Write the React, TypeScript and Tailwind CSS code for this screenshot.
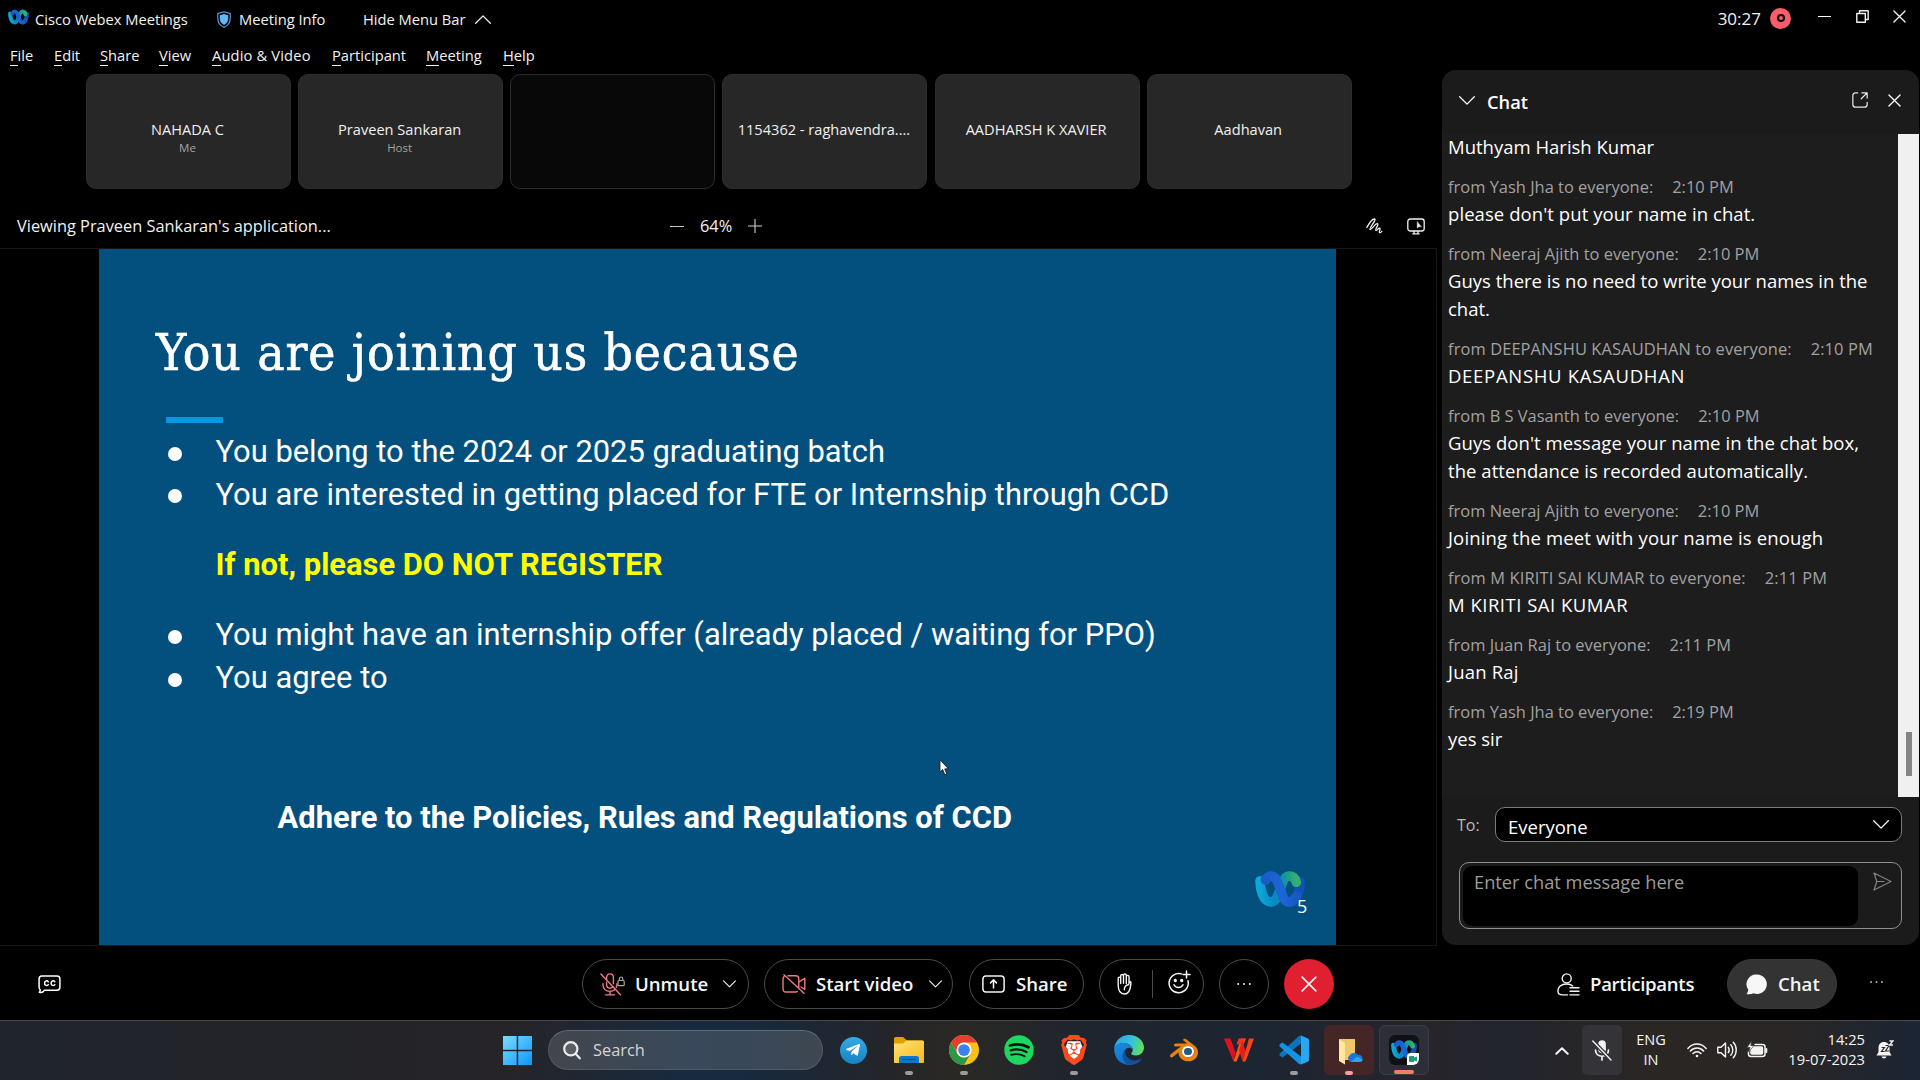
import type { ReactNode } from "react";
import { SiBrave, SiBlender } from "react-icons/si";
import { FaTelegramPlane } from "react-icons/fa";

/* ---------- logos and icons ---------- */

function WebexLogo({ id, className }: { id: string; className: string }) {
  return (
    <svg viewBox="0 0 50 36" className={className} fill="none" strokeLinecap="round" strokeWidth="9.6">
      <defs>
        <linearGradient id={id + "a"} x1="4" y1="8" x2="42" y2="8" gradientUnits="userSpaceOnUse">
          <stop offset="0" stopColor="#0da8d6" />
          <stop offset="0.4" stopColor="#0888c4" />
          <stop offset="0.65" stopColor="#12949c" />
          <stop offset="1" stopColor="#36b070" />
        </linearGradient>
        <linearGradient id={id + "b"} x1="8" y1="0" x2="45" y2="0" gradientUnits="userSpaceOnUse">
          <stop offset="0" stopColor="#1a5bc6" />
          <stop offset="0.5" stopColor="#1c66d8" />
          <stop offset="1" stopColor="#1656c0" />
        </linearGradient>
      </defs>
      <path d="M45 10.5C45 20 41.500 31 34 31" stroke="#1250b4" />
      <path d="M5 10C5 18 8 31 16 31C25.500 31 25 5 34 5C38.500 5 40.500 8 41.300 11.300" stroke={`url(#${id}a)`} />
      <path d="M10.500 9C12 6 13.500 5 16 5C25.500 5 25 31 34 31C37.500 31 40 28.500 42 25" stroke={`url(#${id}b)`} />
    </svg>
  );
}

const line = { fill: "none", stroke: "currentColor", strokeLinecap: "round", strokeLinejoin: "round" } as const;

const Chevron = ({ up, className }: { up?: boolean; className: string }) => (
  <svg viewBox="0 0 16 9" className={className} {...line} strokeWidth="1.3">
    <path d={up ? "M0.700 8.300L8 0.900L15.300 8.300" : "M0.700 0.700L8 8.100L15.300 0.700"} />
  </svg>
);

const Cross = ({ className }: { className: string }) => (
  <svg viewBox="0 0 14 14" className={className} {...line} strokeWidth="1.4">
    <path d="M1 1L13 13M13 1L1 13" />
  </svg>
);

const Shield = () => (
  <svg viewBox="0 0 14 17" className="h-[17px] w-[14px]">
    <path d="M7 0.700L13.200 2.500V7.500C13.200 12 10.500 14.900 7 16.300C3.500 14.900 0.800 12 0.800 7.500V2.500Z" fill="none" stroke="#5fa8f0" strokeWidth="1.100" />
    <path d="M7 3L11.200 4.200V7.600C11.200 10.700 9.500 12.800 7 14C4.500 12.800 2.800 10.700 2.800 7.600V4.200Z" fill="#64b4fa" />
  </svg>
);

const Annotate = () => (
  <svg viewBox="0 0 17 16" className="h-4 w-[17px]" {...line} strokeWidth="1.300">
    <path d="M0.800 9.500C3 5.500 6.500 0.900 8.500 1C11 1.300 2.800 10.500 4 11.500C5.500 12.200 9.300 5.200 11.300 5.700C13.300 6.200 8.800 11.500 9.800 12.300C11 13 12.300 9.800 13.800 10.200C15 10.700 12.500 14 13.600 14.600C14.400 15 15.200 14 15.800 13.400" />
  </svg>
);

const ScreenControl = () => (
  <svg viewBox="0 0 18 17" className="h-[17px] w-[18px]" {...line} strokeWidth="1.300">
    <rect x="0.800" y="1" width="16.400" height="12" rx="2.500" />
    <path d="M7 13.300V15.500M11 13.300V15.500M5.800 15.800H12.200" />
    <path d="M10.300 4V10L11.800 8.700H13.900Z" fill="currentColor" strokeWidth="0.600" />
  </svg>
);

const PopOut = () => (
  <svg viewBox="0 0 17 17" className="h-4 w-4" {...line} strokeWidth="1.300">
    <path d="M6 1H3.800C2 1 0.900 2 0.900 3.800V13.200C0.900 15 2 16.100 3.800 16.100H13.200C15 16.100 16.100 15 16.100 13.200V11" />
    <path d="M10.500 0.900H16.100V6.500M16 1L9.800 7.200" />
  </svg>
);

const Captions = () => (
  <svg viewBox="0 0 23 19" className="h-[19px] w-[23px] text-white" {...line} strokeWidth="1.500">
    <path d="M4 1H19C20.800 1 21.900 2.100 21.900 3.900V12.300C21.900 14.100 20.800 15.200 19 15.200H6.500C5.500 17 3.500 17.800 1.300 17.300C2 16.500 2.300 15.600 2.200 14.800C1.500 14.200 1.100 13.300 1.100 12.300V3.900C1.100 2.100 2.200 1 4 1Z" />
    <path d="M10.300 6.800C9.200 5.200 6.600 5.700 6.600 8.200C6.600 10.600 9.200 11.200 10.300 9.600M16.800 6.800C15.700 5.200 13.100 5.700 13.100 8.200C13.100 10.600 15.700 11.200 16.800 9.600" />
  </svg>
);

const MicMuted = () => (
  <svg viewBox="0 0 25 23" className="h-[23px] w-[25px]" {...line} strokeWidth="1.400">
    <g stroke="#f07a82">
      <path d="M0.900 1L20.500 21.800" />
      <path d="M6.600 6.500V4.500C6.600 2.300 8 0.900 10 0.900S13.400 2.300 13.400 4.500V10.800M6.600 9.300V11.500C6.600 13.800 8 15.200 10 15.200C11 15.200 11.800 14.900 12.400 14.300" />
      <path d="M3 10.800V11.800C3 15.800 5.800 18.400 10 18.400C12 18.400 13.500 17.900 14.700 16.800M10 18.600V21.900M5.500 21.900H14.500M17 10.800C17 12.300 16.800 13.300 16.300 14.300" />
    </g>
    <g stroke="#a5a5a5" strokeWidth="1.200">
      <rect x="18" y="7.500" width="6.200" height="5.200" rx="1" />
      <path d="M19.400 7.300V5.800C19.400 4.700 20.100 4 21.100 4S22.800 4.700 22.800 5.800V7.300" />
    </g>
  </svg>
);

const VideoOff = () => (
  <svg viewBox="0 0 24 20" className="h-5 w-6" {...line} stroke="#f07a82" strokeWidth="1.400">
    <path d="M2 0.800L22 19.200M6 1.800H13.800C15.600 1.800 16.800 3 16.800 4.800V13.500M15.300 17.500C14.900 17.800 14.300 18 13.800 18H4C2.200 18 1 16.800 1 15V4.800C1 3.800 1.400 3 2 2.500" />
    <path d="M16.900 8L22.800 4.300V15.300L19 13" />
  </svg>
);

const ShareIcon = () => (
  <svg viewBox="0 0 23 18" className="h-[18px] w-[23px]" {...line} strokeWidth="1.500">
    <rect x="0.900" y="0.900" width="21.200" height="16.200" rx="3" />
    <path d="M11.500 13V5M8.500 7.900L11.500 4.900L14.500 7.900" />
  </svg>
);

const Hand = () => (
  <svg viewBox="0 0 15 22" className="h-[22px] w-[15px]" {...line} strokeWidth="1.400">
    <path d="M1.200 12V5.500C1.200 3.700 3.700 3.700 3.700 5.500V10.500M3.700 6V2.800C3.700 1 6.500 1 6.500 2.800V10.300M6.500 3V2.300C6.500 0.500 9.300 0.500 9.300 2.300V10.500M9.300 4V3.600C9.300 1.900 12 1.900 12 3.600V10.500L13.200 8.500C13.900 8.800 14 9.600 13.900 10.500C13.500 14 13.500 21 7.500 21C3 21 1.200 18 1.200 12" />
    <path d="M11.800 11.500C9 12 7.300 14 7.300 16.800" />
  </svg>
);

const Emoji = () => (
  <svg viewBox="0 0 24 24" className="h-6 w-6" {...line} strokeWidth="1.500">
    <path d="M14.500 3.900A9.600 9.600 0 1 0 21 10.800" />
    <path d="M19.500 1V8M16 4.500H23M7 14.800C8.500 18.300 14.500 18.300 16 14.800" />
    <circle cx="8.300" cy="10.500" r="0.900" fill="currentColor" />
    <circle cx="14.700" cy="10.500" r="0.900" fill="currentColor" />
  </svg>
);

const Dots = ({ className }: { className: string }) => (
  <svg viewBox="0 0 16 4" className={className} fill="currentColor">
    <circle cx="2.200" cy="2" r="1" />
    <circle cx="8" cy="2" r="1" />
    <circle cx="13.800" cy="2" r="1" />
  </svg>
);

const Person = () => (
  <svg viewBox="0 0 23 23" className="h-[23px] w-[23px]" {...line} strokeWidth="1.400">
    <circle cx="9.700" cy="5.400" r="4.500" />
    <path d="M10.500 21.900H5.500C2.500 21.900 0.900 20.500 0.900 18C0.900 13.800 4 11 9.700 11C12.500 11 14.300 11.600 15.700 12.900M13 14.800H22M13 18.300H22M13 21.900H22" />
  </svg>
);

const Bubble = () => (
  <svg viewBox="0 0 21 21" className="h-[21px] w-[21px]" fill="#f7f7f7">
    <path d="M11 0.500A9.700 9.700 0 1 1 7.500 19.200C5.500 20.400 3 20.700 0.500 20C1.600 18.800 2.200 17.200 2.200 15.600A9.700 9.700 0 0 1 11 0.500Z" />
  </svg>
);

const Send = () => (
  <svg viewBox="0 0 19 19" className="h-[19px] w-[19px]" {...line} strokeWidth="1.200">
    <path d="M1 1L18 9.500L1 18L3.800 9.500ZM3.800 9.500H11" />
  </svg>
);

/* ---------- slide ---------- */

const Bullet = ({ children }: { children: ReactNode }) => (
  <li className="flex h-[42.600px] items-center">
    <span className="mt-[3px] h-3.5 w-3.5 rounded-full bg-white" />
    <span className="ml-[33.500px] whitespace-nowrap">{children}</span>
  </li>
);

function Slide() {
  return (
    <div className="relative h-[696px] w-[1237px] bg-[#03507f] font-['Roboto'] text-[30.900px] leading-[42px] text-white">
      <h1 className="pt-[69px] pl-[57px] font-['DejaVu_Serif_Condensed','DejaVu_Serif',serif] text-[51px] leading-[70px] tracking-[0.900px] whitespace-nowrap [-webkit-text-stroke:0.600px_white]">
        You are joining us because
      </h1>
      <div className="mt-[29px] ml-[67px] h-1.5 w-[57px] bg-[#0a97e0]" />
      <ul className="mt-2 pl-[69px]">
        <Bullet>You belong to the 2024 or 2025 graduating batch</Bullet>
        <Bullet>You are interested in getting placed for FTE or Internship through CCD</Bullet>
      </ul>
      <p className="mt-7 pl-[116.500px] font-bold text-[#ffff00]">If not, please DO NOT REGISTER</p>
      <ul className="mt-7 pl-[69px]">
        <Bullet>You might have an internship offer (already placed / waiting for PPO)</Bullet>
        <Bullet>You agree to</Bullet>
      </ul>
      <p className="mt-[98px] pl-[178.500px] font-bold">Adhere to the Policies, Rules and Regulations of CCD</p>
      <WebexLogo id="slide" className="absolute top-[622px] left-[1156px] h-9 w-[50px]" />
      <span className="absolute top-[645px] left-[1198px] font-['Open_Sans'] text-[18px] leading-6">5</span>
      <svg viewBox="0 0 10 17" className="absolute top-[510px] left-[840px] h-[17px] w-2.5">
        <path d="M1 0.800V13L3.700 10.500L5.800 15.800L7.800 15L5.700 9.900L9.300 9.700Z" fill="#fff" stroke="#111" strokeWidth="0.800" />
      </svg>
    </div>
  );
}

/* ---------- header ---------- */

const menus = [
  { label: "File", w: "w-[44px]" },
  { label: "Edit", w: "w-[46px]" },
  { label: "Share", w: "w-[59px]" },
  { label: "View", w: "w-[53px]" },
  { label: "Audio & Video", w: "w-[120px] tracking-[0.150px]" },
  { label: "Participant", w: "w-[94px]" },
  { label: "Meeting", w: "w-[77px]" },
  { label: "Help", w: "w-[40px]" },
];

const tiles = [
  { name: "NAHADA C", role: "Me" },
  { name: "Praveen Sankaran", role: "Host" },
  { name: "", role: "" },
  { name: "1154362 - raghavendra....", role: "" },
  { name: "AADHARSH K XAVIER", role: "" },
  { name: "Aadhavan", role: "" },
];

function Header() {
  return (
    <header className="flex h-[70px] flex-col text-[14.700px] whitespace-nowrap text-[#f2f2f2]">
      <div className="flex h-[38px] items-center">
        <WebexLogo id="top" className="mb-1 ml-2 h-4 w-[21px]" />
        <span className="ml-1.5 w-[153px]">Cisco Webex Meetings</span>
        <span className="ml-[29px] flex"><Shield /></span>
        <span className="ml-2 w-[87px]">Meeting Info</span>
        <span className="ml-[37px] w-[102px]">Hide Menu Bar</span>
        <Chevron up className="ml-2.5 h-[9px] w-4" />
        <span className="ml-auto text-[17px]">30:27</span>
        <span className="mr-[27px] mb-0.5 ml-[9px] flex h-[21px] w-[21px] items-center justify-center rounded-full bg-[#f95c6b]">
          <span className="h-2 w-2 rounded-full border-2 border-black" />
        </span>
        <span className="mb-[5px] h-[1.500px] w-[13px] bg-white" />
        <svg viewBox="0 0 13 13" className="mb-1.5 ml-[25px] h-[13px] w-[13px]" {...line} strokeWidth="1.400" strokeLinecap="butt">
          <path d="M0.800 3.500H9.300V12.200H0.800ZM3.500 3.200V0.800H12.200V9.500H9.600" />
        </svg>
        <Cross className="mr-3.5 mb-1.5 ml-6 h-[13px] w-[13px]" />
      </div>
      <nav className="flex h-8 items-center pt-[3px] pl-2.5">
        {menus.map((m) => (
          <span key={m.label} className={m.w}>
            <span className="border-b border-[#f2f2f2] leading-none">{m.label[0]}</span>
            {m.label.slice(1)}
          </span>
        ))}
      </nav>
    </header>
  );
}

function Tiles() {
  return (
    <div className="mt-1 flex shrink-0 gap-[7.150px] pl-[86px]">
      {tiles.map((t, i) =>
        t.name ? (
          <div key={i} className="flex h-[115px] w-[205px] flex-col items-center rounded-[10px] border border-[#2d2d2d] bg-[#272727] pt-[43px] pr-0.5 whitespace-nowrap">
            <span className="text-[14.600px] leading-[22px] text-[#f0f0f0]">{t.name}</span>
            <span className="text-[11.500px] leading-4 text-[#a3a3a3]">{t.role}</span>
          </div>
        ) : (
          <div key={i} className="h-[115px] w-[205px] rounded-[10px] border border-[#2b2b2b] bg-[#080808]" />
        ),
      )}
    </div>
  );
}

/* ---------- chat ---------- */

const messages = [
  { from: "Yash Jha", time: "2:10 PM", text: ["please don't put your name in chat."], track: "tracking-[0.070px]" },
  { from: "Neeraj Ajith", time: "2:10 PM", text: ["Guys there is no need to write your names in the", "chat."] },
  { from: "DEEPANSHU KASAUDHAN", time: "2:10 PM", text: ["DEEPANSHU KASAUDHAN"], track: "tracking-[0.700px]", meta: "tracking-[0.100px]" },
  { from: "B S Vasanth", time: "2:10 PM", text: ["Guys don't message your name in the chat box,", "the attendance is recorded automatically."], track: "tracking-[0.060px]" },
  { from: "Neeraj Ajith", time: "2:10 PM", text: ["Joining the meet with your name is enough"], track: "tracking-[0.150px]" },
  { from: "M KIRITI SAI KUMAR", time: "2:11 PM", text: ["M KIRITI SAI KUMAR"], track: "tracking-[0.500px]", meta: "tracking-[0.130px]" },
  { from: "Juan Raj", time: "2:11 PM", text: ["Juan Raj"], track: "tracking-[0.200px]" },
  { from: "Yash Jha", time: "2:19 PM", text: ["yes sir"] },
];

function ChatPanel() {
  return (
    <aside className="flex h-[875px] w-[477px] flex-col overflow-hidden rounded-[14px] bg-[#1b1b1b]">
      <div className="flex h-16 items-center pl-[17px] text-white">
        <Chevron className="mb-1 h-[9px] w-4" />
        <span className="ml-3 text-[18.300px] font-semibold">Chat</span>
        <span className="mb-1 ml-auto flex text-[#e8e8e8]"><PopOut /></span>
        <Cross className="mr-[18px] mb-1 ml-5 h-[13px] w-[13px]" />
      </div>
      <div className="flex h-[663px] bg-[#1d1d1d]">
        <div className="flex-1 pl-1.5 text-[18.500px] leading-7 whitespace-nowrap text-white">
          <p className="-mt-px">Muthyam Harish Kumar</p>
          {messages.map((m, i) => (
            <div key={i} className="mt-[13px]">
              <p className={`flex h-[26px] items-center gap-[19px] text-[16.450px] text-[#a2a2a2] ${m.meta ?? ""}`}>
                <span>from {m.from} to everyone:</span>
                <span>{m.time}</span>
              </p>
              {m.text.map((t) => (
                <p key={t} className={m.track}>{t}</p>
              ))}
            </div>
          ))}
        </div>
        <div className="w-[21px] bg-[#f0f0f0] pt-[598px] pl-2">
          <div className="h-11 w-1.5 bg-[#858585]" />
        </div>
      </div>
      <div className="mt-2.5 flex h-[35px] items-center pl-[15px]">
        <span className="w-[38px] text-[16px] text-[#b8b8b8]">To:</span>
        <div className="flex h-[35px] w-[407px] items-center justify-between rounded-[10px] border border-[#7d7d7d] bg-black pr-3 pl-3 text-[18.500px] text-white">
          <span className="pt-1">Everyone</span>
          <Chevron className="h-[9px] w-4" />
        </div>
      </div>
      <div className="mt-5 ml-[17px] flex h-[67px] w-[443px] justify-between rounded-[10px] border border-[#8f8f8f] p-[3px] pr-[9px]">
        <div className="h-[60px] w-[395px] rounded-[9px] bg-black pt-0.5 pl-[11px] text-[18.250px] leading-7 text-[#9c9c9c]">Enter chat message here</div>
        <span className="pt-1.5 text-[#828282]"><Send /></span>
      </div>
    </aside>
  );
}

/* ---------- meeting controls ---------- */

function Controls() {
  const pill = "flex h-[50px] items-center rounded-full border border-[#4b4b4b]";
  return (
    <div className="flex h-[74px] items-center pt-0.5 whitespace-nowrap text-[18.600px] font-semibold text-[#f5f5f5]">
      <span className="ml-[38px] w-[544px]"><Captions /></span>
      <div className={`${pill} w-[167px] pl-[17px]`}>
        <MicMuted />
        <span className="ml-2.5 w-[88px]">Unmute</span>
        <Chevron className="h-2 w-[13px]" />
      </div>
      <div className={`${pill} ml-[15px] w-[189px] pl-[17px]`}>
        <VideoOff />
        <span className="ml-[10px] w-[113px]">Start video</span>
        <Chevron className="h-2 w-[13px]" />
      </div>
      <div className={`${pill} ml-4 w-[115px] pl-3`}>
        <ShareIcon />
        <span className="ml-[11px]">Share</span>
      </div>
      <div className={`${pill} ml-[15px] w-[105px] pl-[17px]`}>
        <Hand />
        <span className="ml-5 h-7 w-px bg-[#4b4b4b]" />
        <span className="mb-1 ml-3.5"><Emoji /></span>
      </div>
      <div className={`${pill} ml-[15px] w-[50px] justify-center`}>
        <Dots className="h-1 w-4" />
      </div>
      <div className="ml-[15px] flex h-[50px] w-[50px] items-center justify-center rounded-full bg-[#e01f31]">
        <Cross className="h-4 w-4" />
      </div>
      <span className="ml-[223px]"><Person /></span>
      <span className="ml-2.5 w-[104px] tracking-[-0.300px]">Participants</span>
      <div className="ml-[33px] flex h-[50px] w-[110px] items-center rounded-full border border-[#3a3a3a] bg-[#333333] pl-[18px]">
        <Bubble />
        <span className="ml-[11px]">Chat</span>
      </div>
      <Dots className="mb-1 ml-8 h-1 w-[15px] text-[#bdbdbd]" />
    </div>
  );
}

/* ---------- taskbar ---------- */

const Explorer = () => (
  <svg viewBox="0 0 30 28" className="h-7 w-[30px]">
    <defs>
      <linearGradient id="folder" x1="0" y1="0" x2="1" y2="1">
        <stop offset="0" stopColor="#ffe27a" />
        <stop offset="1" stopColor="#f9b915" />
      </linearGradient>
    </defs>
    <path d="M0 8V2.500Q0 1 1.500 1H9L13 4.500H28.500Q30 4.500 30 6V12H0Z" fill="#e0a100" />
    <path d="M0 7.500H9L12.500 4.500H28.500Q30 4.500 30 6V26Q30 27 29 27H1Q0 27 0 26Z" fill="url(#folder)" />
    <path d="M5 27V22.500Q5 20 7.500 20H22.500Q25 20 25 22.500V27Z" fill="#0a78d0" />
    <path d="M8.500 23.500H21.500" stroke="#0a4f96" strokeWidth="1.200" />
  </svg>
);

const Chrome = () => (
  <svg viewBox="0 0 48 48" className="h-[30px] w-[30px]">
    <circle cx="24" cy="24" r="24" fill="#fbc116" />
    <path d="M3.200 12A24 24 0 0 1 44.800 12H24A12 12 0 0 0 13.600 18L12.500 28Z" fill="#e83e30" />
    <path d="M3.200 12L13.600 30A12 12 0 0 0 34.400 30L24 48A24 24 0 0 1 3.200 12Z" fill="#2a9846" />
    <circle cx="24" cy="24" r="12" fill="#fff" />
    <circle cx="24" cy="24" r="9.400" fill="#3b82f0" />
  </svg>
);

const Spotify = () => (
  <svg viewBox="0 0 30 30" className="h-[30px] w-[30px]" fill="none" stroke="#08140b" strokeLinecap="round">
    <circle cx="15" cy="15" r="14.700" fill="#1fd760" stroke="none" />
    <path d="M6 10.500C12.500 8.700 19.500 9.500 24.500 12.300" strokeWidth="2.700" />
    <path d="M6.700 15.300C12 13.800 18 14.400 22.500 17" strokeWidth="2.300" />
    <path d="M7.300 19.700C12 18.600 16.800 19 20.700 21.300" strokeWidth="1.900" />
  </svg>
);

const Edge = () => (
  <svg viewBox="0 0 30 30" className="h-[30px] w-[30px]">
    <defs>
      <linearGradient id="edgeTop" x1="0" y1="0.400" x2="1" y2="0.600">
        <stop offset="0" stopColor="#2ba6e8" />
        <stop offset="0.550" stopColor="#35c3d8" />
        <stop offset="1" stopColor="#66e04c" />
      </linearGradient>
      <linearGradient id="edgeLeft" x1="0" y1="0" x2="0.600" y2="1">
        <stop offset="0" stopColor="#1c90e0" />
        <stop offset="1" stopColor="#0f6cc8" />
      </linearGradient>
    </defs>
    <path d="M0.200 14C0.500 6 7 0 15 0C24 0 30 6.300 30 12.500C30 17.500 26 20.500 22 20.500C18.500 20.500 17 19.300 17.300 18.500C17.700 17.600 18.700 17 18.700 15C18.700 11 14 8 9.500 8C4 8 1 11.500 0.200 14Z" fill="url(#edgeTop)" />
    <path d="M0.200 14C1.500 10 5 8 9.500 8C14.500 8 18.700 11 18.700 15C17.500 12.500 14.500 12 12.500 13.500C8 17 10 25 19 29.500C8 32 0 24 0.200 14Z" fill="url(#edgeLeft)" />
    <path d="M12.500 13.500C8.500 17.500 13.500 25.500 21 25.500C24.500 25.500 27 24 28.200 22.800C26.500 27 21.500 30 16 30C9 29.500 5.500 18 12.500 13.500Z" fill="#13519f" />
  </svg>
);

const Blender = () => (
  <span className="relative flex h-[28px] w-[28px] items-center justify-center">
    <SiBlender className="h-[28px] w-[28px] text-[#e8820c]" />
    <span className="absolute top-[10px] left-[12px] h-[11px] w-[12px] rounded-full border-2 border-white bg-[#265787]" />
  </span>
);

const Wps = () => (
  <svg viewBox="0 0 30 24" className="h-6 w-[30px]">
    <path d="M0 0.500H6.500L11.500 14.500L9.500 23.500Z" fill="#e0121c" />
    <path d="M9.500 23.500L17 0.500H22L12.500 23.500Z" fill="#ff5a1a" />
    <path d="M14.500 0.500H21L18 9L17 6.500H12.500Z" fill="#f5301c" />
    <path d="M15 12L18.500 3L21.500 13L18.500 23.500Z" fill="#e0201c" />
    <path d="M18.500 23.500L25 0.500H30L21.500 23.500Z" fill="#ff4216" />
  </svg>
);

const VsCode = () => (
  <svg viewBox="0 0 30 30" className="h-[30px] w-[30px]">
    <path d="M22 0.500L29 3.500Q30 4 30 5V25Q30 26 29 26.500L22 29.500Z" fill="#29a7f2" />
    <path d="M22 0.500V8.500L3.500 22.500L0.500 20.500V18.700L20 1Z" fill="#0b74bd" />
    <path d="M22 29.500V21.500L3.500 7.500L0.500 9.500V11.300L20 29Z" fill="#1593e0" />
  </svg>
);

const OneDriveFolder = () => (
  <svg viewBox="0 0 24 27" className="mt-0.5 ml-1 h-[27px] w-6">
    <path d="M0 1H16V22H6Z" fill="#efc869" />
    <path d="M0 1L6 5V26.500L0 23Z" fill="#ffe79c" />
    <path d="M11.500 24A3.800 3.800 0 0 1 10.500 17.500A5 5 0 0 1 19 17A3.600 3.600 0 0 1 23.500 21Q23.500 24 20.500 24Z" fill="#1578d4" />
    <path d="M12 24L18 18.500L23.500 21.500Q23.500 24 20.500 24Z" fill="#2fa4ee" />
  </svg>
);

const WebexApp = () => (
  <span className="relative flex h-[30px] w-[30px] items-center justify-center rounded-[6px] bg-[#101114]">
    <WebexLogo id="task" className="mb-0.5 h-[19px] w-[26px]" />
    <span className="absolute right-0 bottom-0 flex h-3 w-3 items-center justify-center rounded-tl-[4px] rounded-br-[6px] bg-white">
      <svg viewBox="0 0 8 6" className="h-1.5 w-2" fill="#1f9d7a">
        <path d="M0 1Q0 0 1 0H5V1.500L8 0.500V5.500L5 4.500V6H1Q0 6 0 5Z" />
      </svg>
    </span>
  </span>
);

const apps: { icon: ReactNode; mark?: string; tile?: string }[] = [
  { icon: <span className="mr-px flex h-[27px] w-[27px] items-center justify-center rounded-full bg-linear-to-b from-[#35a9e6] to-[#1383c4]"><FaTelegramPlane className="mr-0.5 h-4 w-4 text-white" /></span> },
  { icon: <Explorer />, mark: "w-2 bg-[#9a9a9a]" },
  { icon: <Chrome />, mark: "w-2 bg-[#9a9a9a]" },
  { icon: <Spotify /> },
  {
    icon: (
      <svg viewBox="0 0 24 24" className="h-[30px] w-[30px]">
        <path d="M7 5L17 5L18.500 9L16 17L12 20L8 17L5.500 9Z" fill="#fff" />
        <SiBrave size={24} color="#fb4a1c" />
      </svg>
    ),
    mark: "w-2 bg-[#9a9a9a]",
  },
  { icon: <Edge /> },
  { icon: <Blender /> },
  { icon: <Wps /> },
  { icon: <VsCode />, mark: "w-2 bg-[#9a9a9a]" },
  { icon: <OneDriveFolder />, mark: "w-2 bg-[#ff9aa6]", tile: "bg-[#452626]" },
  { icon: <WebexApp />, mark: "w-5 bg-[#f08168]", tile: "border border-[#3a3d46] bg-[#2c2f37]" },
];

function Taskbar() {
  return (
    <footer className="flex h-[60px] items-center border-t border-[#4a4a4c] bg-linear-[90deg,#20242c_0%,#242428_20%,#262428_26%,#172a3f_36%,#18293b_40%,#24252a_46%,#2a2824_50%,#1f252e_56%,#1c2532_66%,#28242a_74%,#22252e_78%,#2a2624_86%,#2a2625_93%,#1b2534_100%] text-[#f4f4f4]">
      <svg viewBox="0 0 29 29" className="ml-[503px] h-[29px] w-[29px]">
        <defs>
          <linearGradient id="win" x1="0" y1="0" x2="1" y2="1">
            <stop offset="0" stopColor="#7bdcff" />
            <stop offset="1" stopColor="#0d96fa" />
          </linearGradient>
        </defs>
        <path d="M0 0H13.700V13.700H0ZM15.200 0H29V13.700H15.200ZM0 15.200H13.700V29H0ZM15.200 15.200H29V29H15.200Z" fill="url(#win)" />
      </svg>
      <div className="mb-px ml-4 flex h-10 w-[275px] items-center rounded-full border border-white/10 border-t-white/20 bg-white/15 pl-3.5">
        <svg viewBox="0 0 18 19" className="h-[19px] w-[18px]" {...line} stroke="#ececec" strokeWidth="2.200">
          <circle cx="7.800" cy="7.800" r="6.600" fill="#ffffff22" />
          <path d="M12.800 13L16.800 17.300" />
        </svg>
        <span className="mt-px ml-3 text-[16.400px] text-[#d4d6d8]">Search</span>
      </div>
      <div className="mb-px ml-1.5 flex gap-[5px]">
        {apps.map((a, i) => (
          <div key={i} className={`relative flex h-[50px] w-[50px] items-center justify-center rounded-[6px] ${a.tile ?? ""}`}>
            {a.icon}
            {a.mark && <span className={`absolute bottom-0 left-1/2 h-1 -translate-x-1/2 rounded-full ${a.mark}`} />}
          </div>
        ))}
      </div>
      <svg viewBox="0 0 14 8" className="ml-[126px] h-2 w-3.5" {...line} strokeWidth="2">
        <path d="M1.300 6.800L7 1.300L12.700 6.800" />
      </svg>
      <div className="mb-px ml-[13px] flex h-[50px] w-10 items-center justify-center rounded-[5px] bg-[#343337]">
        <svg viewBox="0 0 20 21" className="h-[21px] w-5" {...line} strokeWidth="1.700">
          <rect x="7" y="1" width="6" height="11.500" rx="3" fill="currentColor" />
          <path d="M3.500 10C3.500 18.300 16.500 18.300 16.500 10M10 16.500V20" />
          <path d="M0.800 1L19 20" stroke="#343337" strokeWidth="4" />
          <path d="M0.800 1L19 20" strokeWidth="1.400" />
        </svg>
      </div>
      <div className="mb-px ml-3.5 w-[30px] text-center text-[14.500px] leading-5">ENG<br />IN</div>
      <svg viewBox="0 0 20 15" className="mb-px ml-[21px] h-[15px] w-5" {...line} strokeWidth="1.500">
        <path d="M0.900 5.500C5.900 -0.400 14.100 -0.400 19.100 5.500M3.400 8C7.100 3.900 12.900 3.900 16.600 8M6 10.500C8.300 8 11.700 8 14 10.500" />
        <circle cx="10" cy="13" r="1.300" fill="currentColor" stroke="none" />
      </svg>
      <svg viewBox="0 0 20 18" className="mb-px ml-2.5 h-[18px] w-5" {...line} strokeWidth="1.400">
        <path d="M0.800 6.300H4L8.500 2V16L4 11.700H0.800ZM11.300 6.300C12.500 8 12.500 10 11.300 11.700M13.800 3.800C16.500 6.800 16.500 11.200 13.800 14.200M16.300 1.300C20.200 5.500 20.200 12.500 16.300 16.700" />
      </svg>
      <svg viewBox="0 0 21 17" className="mb-0.5 ml-2.5 h-[17px] w-[21px]" {...line} strokeWidth="1.500">
        <path d="M8 3.500H15.500Q18 3.500 18 6V13Q18 15.500 15.500 15.500H4Q1.500 15.500 1.500 13V10.500" />
        <rect x="4" y="6" width="11.500" height="7" rx="1" fill="currentColor" />
        <path d="M19.300 8V11" strokeWidth="2" />
        <path d="M4.500 0L0 6.500H3L1.500 11L7 4.500H4Z" fill="currentColor" stroke="#2a2625" strokeWidth="0.600" />
      </svg>
      <div className="mb-[3px] ml-[15px] w-[82px] text-right text-[14.700px] leading-5">14:25<br />19-07-2023</div>
      <svg viewBox="0 0 18 20" className="mb-px ml-[11px] h-5 w-[18px]">
        <path d="M8 2C4.500 2 2.500 4.500 2.500 8V12L0.500 15.500H15.500L13.500 12V8C13.500 4.500 11.500 2 8 2ZM5.500 16.500A2.600 2.600 0 0 0 10.500 16.500Z" fill="currentColor" />
        <path d="M5.500 7.500H8.500L5.500 11.500H8.500M9.500 5.500H13L9.500 11H13" fill="none" stroke="#2a2625" strokeWidth="1.200" />
        <path d="M13.500 1H17L13.500 5H17" fill="none" stroke="currentColor" strokeWidth="1.300" />
      </svg>
    </footer>
  );
}

export default function App() {
  return (
    <div className="flex h-[1080px] w-[1920px] flex-col overflow-hidden bg-black font-['Open_Sans','Noto_Sans',sans-serif]">
      <Header />
      <div className="flex h-[876px]">
        <main className="flex w-[1442px] flex-col">
          <Tiles />
          <div className="flex h-[59px] shrink-0 items-center pt-[15px] text-[16.370px] whitespace-nowrap text-[#f2f2f2]">
            <span className="ml-[17px] w-[653px]">Viewing Praveen Sankaran's application...</span>
            <span className="h-px w-3.5 bg-[#c8c8c8]" />
            <span className="ml-4 w-[48px]">64%</span>
            <svg viewBox="0 0 14 14" className="h-3.5 w-3.5" stroke="#d0d0d0" strokeWidth="1.100">
              <path d="M0 7H14M7 0V14" />
            </svg>
            <span className="ml-[604px]"><Annotate /></span>
            <span className="ml-6"><ScreenControl /></span>
          </div>
          <div className="flex h-[698px] w-[1437px] shrink-0 border border-l-0 border-[#171717] pl-[99px]">
            <Slide />
          </div>
        </main>
        <ChatPanel />
      </div>
      <Controls />
      <Taskbar />
    </div>
  );
}
